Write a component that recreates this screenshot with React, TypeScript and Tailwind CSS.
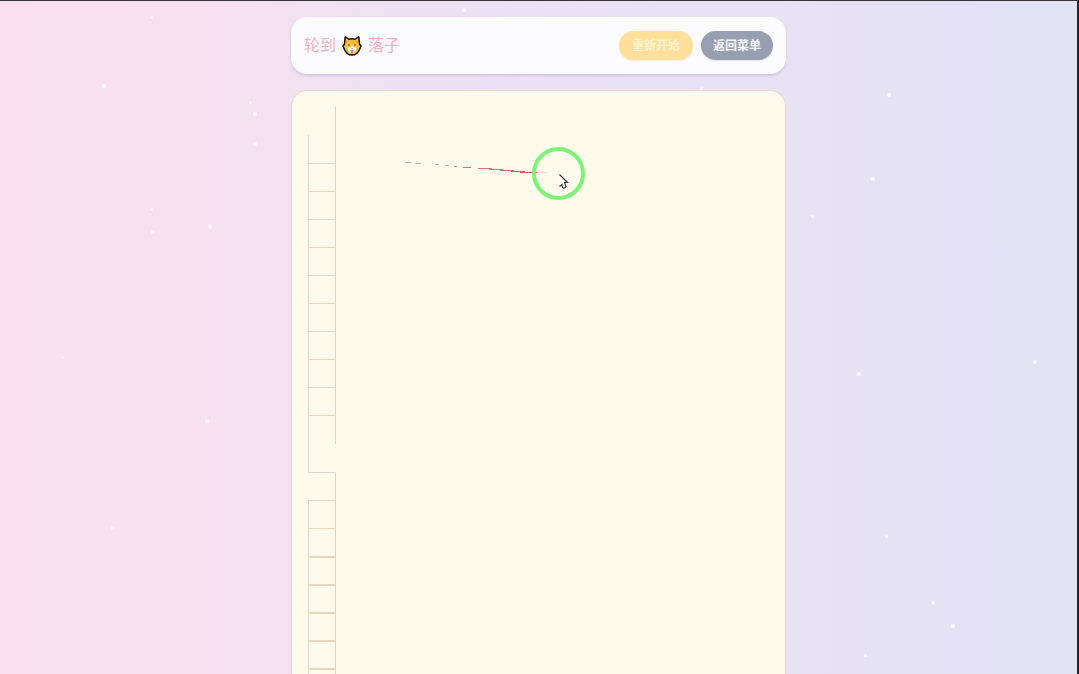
import { useState } from 'react';

const CELL = 28;

const STARS = [
  { x: 13.9, y: 2.2 },
  { x: 42.9, y: 1.1 },
  { x: 9.5, y: 12.4 },
  { x: 23.1, y: 14.8 },
  { x: 23.5, y: 16.5 },
  { x: 23.5, y: 20.9 },
  { x: 13.9, y: 30.8 },
  { x: 14, y: 34.1 },
  { x: 19.3, y: 33.3 },
  { x: 5.7, y: 52.8 },
  { x: 19, y: 62.1 },
  { x: 10.3, y: 78 },
  { x: 65, y: 12.8 },
  { x: 82.4, y: 13.6 },
  { x: 80.9, y: 26.2 },
  { x: 75.3, y: 31.8 },
  { x: 95.9, y: 53.3 },
  { x: 79.6, y: 55.1 },
  { x: 82.2, y: 79.4 },
  { x: 86.4, y: 89.1 },
  { x: 88.3, y: 92.5 },
  { x: 80.2, y: 97 },
];

function Stars() {
  return (
    <div className="pointer-events-none absolute inset-0" aria-hidden="true">
      {STARS.map((star, i) => (
        <span
          key={i}
          className={
            i % 3 === 0
              ? 'absolute size-[3px] rounded-full bg-white/70'
              : 'absolute size-1 rounded-full bg-white/90'
          }
          style={{ left: `${star.x}%`, top: `${star.y}%` }}
        />
      ))}
    </div>
  );
}

function CatIcon() {
  return (
    <svg width="20" height="20" viewBox="0 0 20 20" role="img" aria-label="cat">
      <path
        d="M3.2 0.9 L6.8 3.2 Q10 2.4 13.2 3.2 L16.8 0.9 Q17.5 5 17.4 8 L19 10.2 L17.4 13.8 Q14.6 19 10 19.1 Q5.4 19 2.6 13.8 L1 10.2 L2.6 8 Q2.5 5 3.2 0.9 Z"
        fill="#f8c03e"
        stroke="#171310"
        strokeWidth="1.5"
        strokeLinejoin="round"
      />
      <path d="M4 3.8 L6 5 L4.2 7.4 Z M16 3.8 L14 5 L15.8 7.4 Z" fill="#f39a3c" />
      <path d="M8.5 4.2 V7 M10 4 V7.5 M11.5 4.2 V7" stroke="#eeae36" strokeWidth="0.8" />
      <path
        d="M10 9.5 Q11 11.4 13.8 11.6 Q15 14.4 13 16.2 Q10 18.2 7 16.2 Q5 14.4 6.2 11.6 Q9 11.4 10 9.5 Z"
        fill="#fff4f2"
      />
      <circle cx="7" cy="9" r="0.8" fill="#54401b" />
      <circle cx="13" cy="9" r="0.8" fill="#54401b" />
      <path d="M9 12 H11 L10 13.2 Z" fill="#ee7f92" />
      <path d="M8.6 14.4 H11.4 Q11.2 17 10 17 Q8.8 17 8.6 14.4 Z" fill="#ee4a45" />
    </svg>
  );
}

function Board() {
  // Rows that have been stroked so far, counted in cells from the top
  const upperRows = [2, 3, 4, 5, 6, 7, 8, 9, 10, 11];
  const lowerRows = [14, 15, 16, 17, 18, 19, 20];

  return (
    <svg className="block h-[620px] w-full overflow-visible" aria-label="棋盘">
      <g stroke="#dcd5d8" strokeWidth="1" fill="none">
        <path d="M0.5 28 V365.5 H27.5 V620" />
        <path d="M27.5 0 V337" />
        <path d="M0.5 393 V620" />
      </g>
      <g stroke="#e8d5c4" strokeWidth="1">
        {upperRows.map((row) => (
          <line key={row} x1="1" x2="28" y1={row * CELL + 0.5} y2={row * CELL + 0.5} />
        ))}
      </g>
      <g stroke="#e9d7b9">
        {lowerRows.map((row) => (
          <line
            key={row}
            x1="1"
            x2="28"
            y1={row < 16 ? row * CELL + 1.5 : row * CELL + 2}
            y2={row < 16 ? row * CELL + 1.5 : row * CELL + 2}
            strokeWidth={row < 16 ? 1 : 2}
          />
        ))}
      </g>

      {/* pointer trail */}
      <g fill="none">
        <path d="M97 55.5 H103 M107 56.5 H113 M127 57.5 H131 M137 58.5 H141" stroke="#d3aaa6" />
        <path d="M146 59.5 H149 M155 60.5 H163" stroke="#c97b78" />
        <path d="M170 61.5 H184 M181 62.5 H195 M192 63.5 H206" stroke="#dc7474" />
        <path d="M203 64.5 H217 M212 65.5 H229" stroke="#dc5558" />
        <path d="M229 65.5 H239" stroke="#f7d3de" />
      </g>

      {/* click ring and cursor */}
      <circle cx="250.5" cy="66.5" r="24.5" fill="none" stroke="#7bf573" strokeWidth="4" />
      <path
        d="M251.5 67.5 L259.5 75.5 H256.5 L258 79.5 Q256.5 82 254.5 80.5 L254 77.5 L251.5 79.5"
        fill="#fffefa"
        stroke="#363636"
        strokeWidth="1.2"
      />
    </svg>
  );
}

export default function App() {
  const [round, setRound] = useState(0);

  return (
    <div className="relative h-screen overflow-hidden border-t border-r-2 border-t-[#3a333c] border-r-[#25242c] bg-linear-to-r from-[#fbe0ee] via-[#ebe2f5] via-50% to-[#e2e2f3] font-['Liberation_Sans','Noto_Sans_CJK_SC',sans-serif]">
      <Stars />

      <main className="relative mx-auto flex w-full max-w-[495px] flex-col gap-4 pt-4">
        <header className="flex items-center justify-between rounded-2xl bg-[#fcfbfe] px-[13px] py-[14px] shadow-[0_2px_3px_#cfc6dd]">
          <h1 className="flex items-center gap-1.5 text-base leading-5 text-[#f3b0c4]">
            <span>轮到</span>
            <CatIcon />
            <span>落子</span>
          </h1>
          <div className="flex gap-2">
            <button
              type="button"
              onClick={() => setRound(round + 1)}
              className="h-[29px] rounded-full bg-[#fee09a] px-[13px] text-xs font-bold text-[#fff3cf] shadow-[0_1px_2px_#f5ead0]"
            >
              重新开始
            </button>
            <button
              type="button"
              className="h-[29px] rounded-full bg-[#96a0b1] px-3 text-xs font-bold text-[#f7f9ff] shadow-[0_1px_2px_#e4e2ee]"
            >
              返回菜单
            </button>
          </div>
        </header>

        <section className="rounded-2xl border border-[#e9d5dd] border-t-[#f1d3c9] bg-[#fffbec] p-4">
          <Board key={round} />
        </section>
      </main>
    </div>
  );
}
